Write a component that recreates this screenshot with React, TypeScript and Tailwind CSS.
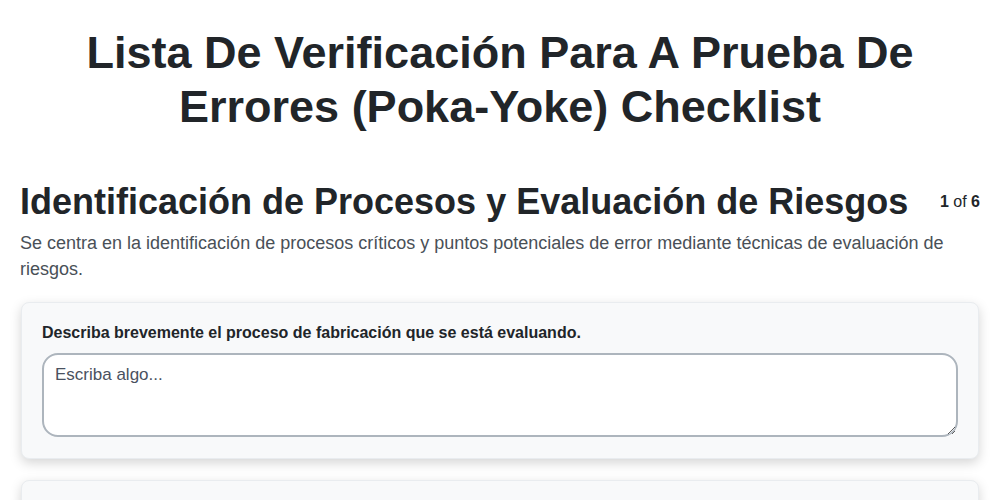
import React from "react";

export default function App() {
  return (
    <div className="min-h-screen bg-white text-[#212529]" style={{ fontFamily: '"Liberation Sans", Arial, sans-serif' }}>
      <div className="px-5">
        <h1 className="pt-[26px] text-center text-[45px] font-bold leading-[54px] text-[#212529]">
          Lista De Verificación Para A Prueba De
          <br />
          Errores (Poka-Yoke) Checklist
        </h1>
        <div className="mt-[46px] flex items-center justify-between">
          <h2 className="text-[36px] font-bold leading-[44px] text-[#212529]">
            Identificación de Procesos y Evaluación de Riesgos
          </h2>
          <div className="text-[16px] text-[#212529]">
            <span className="font-bold">1</span> of <span className="font-bold">6</span>
          </div>
        </div>
        <p className="mt-[6px] text-[18px] leading-[26px] text-[#495057]">
          Se centra en la identificación de procesos críticos y puntos potenciales de error mediante técnicas de evaluación de riesgos.
        </p>
        <div className="mt-[20px] mx-[1px] rounded-lg border border-[#e9ecef] bg-[#f8f9fa] px-5 pt-[20px] pb-[21px] shadow-[0_4px_12px_rgba(0,0,0,0.17)]">
          <label className="block text-[16px] font-bold leading-[20px] text-[#212529]">
            Describa brevemente el proceso de fabricación que se está evaluando.
          </label>
          <textarea
            placeholder="Escriba algo..."
            className="mt-[10px] block h-[84px] w-full rounded-2xl border-2 border-[#adb5bd] bg-white pl-[11px] pr-3 pt-[7px] pb-2 text-[17px] text-[#212529] placeholder:text-[#4a5160] outline-none"
          />
        </div>
        <div className="mt-[21px] mx-[1px] h-[100px] rounded-lg border border-[#e9ecef] bg-[#f8f9fa] shadow-[0_4px_12px_rgba(0,0,0,0.17)]" />
      </div>
    </div>
  );
}
